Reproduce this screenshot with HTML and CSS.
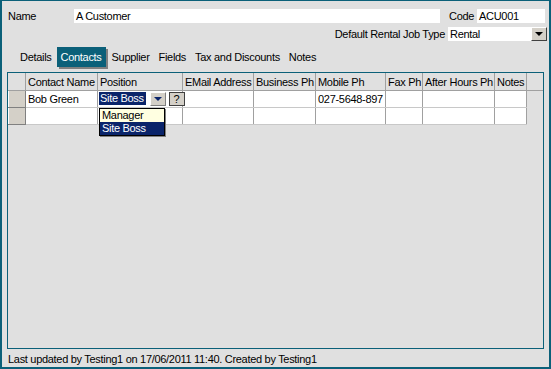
FILE: index.html
```html
<!DOCTYPE html>
<html lang="en">

<head>
    <meta charset="UTF-8">
    <title>Customer</title>
    <link rel="stylesheet" href="styles.css">
</head>

<body>
    <div class="window">
        <div class="row row-name">
            <span class="label label-name">Name</span>
            <span class="field field-name">A Customer</span>
            <span class="label label-code">Code</span>
            <span class="field field-code">ACU001</span>
        </div>
        <div class="row row-type">
            <span class="label">Default Rental Job Type</span>
            <span class="field field-type">Rental
                <span class="combo-btn"><span class="arrow"></span></span>
            </span>
        </div>

        <div class="tabs">
            <span class="tab">Details</span>
            <span class="tab active">Contacts</span>
            <span class="tab">Supplier</span>
            <span class="tab">Fields</span>
            <span class="tab">Tax and Discounts</span>
            <span class="tab">Notes</span>
        </div>

        <div class="grid-box">
            <table class="grid">
                <colgroup>
                    <col style="width: 17px">
                    <col style="width: 72px">
                    <col style="width: 85px">
                    <col style="width: 71px">
                    <col style="width: 62px">
                    <col style="width: 70px">
                    <col style="width: 37px">
                    <col style="width: 72px">
                    <col style="width: 32px">
                    <col>
                </colgroup>
                <tr class="head">
                    <th></th>
                    <th>Contact Name</th>
                    <th>Position</th>
                    <th>EMail Address</th>
                    <th>Business Ph</th>
                    <th>Mobile Ph</th>
                    <th>Fax Ph</th>
                    <th>After Hours Ph</th>
                    <th>Notes</th>
                    <th class="filler"></th>
                </tr>
                <tr>
                    <td class="indicator"></td>
                    <td>Bob Green</td>
                    <td class="editor">
                        <span class="selected">Site Boss</span>
                        <span class="drop-btn"><span class="arrow"></span></span>
                        <span class="help-btn">?</span>
                        <div class="drop-list">
                            <div class="item">Manager</div>
                            <div class="item current">Site Boss</div>
                        </div>
                    </td>
                    <td></td>
                    <td></td>
                    <td>027-5648-897</td>
                    <td></td>
                    <td></td>
                    <td></td>
                    <td class="empty"></td>
                </tr>
                <tr>
                    <td class="indicator"></td>
                    <td></td>
                    <td></td>
                    <td></td>
                    <td></td>
                    <td></td>
                    <td></td>
                    <td></td>
                    <td></td>
                    <td class="empty"></td>
                </tr>
            </table>
        </div>

        <div class="status">Last updated by Testing1 on 17/06/2011 11:40. Created by Testing1</div>
    </div>
</body>

</html>
```

FILE: styles.css
```css
body {
    margin: 0;
    font-family: "Liberation Sans", Arial, sans-serif;
    font-size: 11px;
    letter-spacing: -0.3px;
    color: #000;
}

.window {
    box-sizing: border-box;
    width: 551px;
    height: 369px;
    background-color: #e0e0e0;
    border: 2px solid #0b6079;
    border-top-width: 1px;
    display: flex;
    flex-direction: column;
}

.row {
    display: flex;
    align-items: center;
    height: 14px;
    line-height: 14px;
}

.row-name {
    margin-top: 8px;
    padding-left: 6px;
}

.label-name {
    width: 66px;
}

.field {
    background-color: #fff;
    height: 14px;
    padding-left: 2px;
    box-sizing: border-box;
    white-space: nowrap;
}

.field-name {
    width: 366px;
}

.label-code {
    margin-left: 9px;
    width: 28px;
}

.field-code {
    width: 68px;
}

.row-type {
    margin-top: 4px;
    justify-content: flex-end;
    padding-right: 2px;
}

.field-type {
    width: 99px;
    margin-left: 3px;
    position: relative;
}

.combo-btn {
    position: absolute;
    right: 0;
    top: 0;
    width: 16px;
    height: 14px;
    box-sizing: border-box;
    background-color: #d4d0c8;
    border: 1px solid;
    border-color: #fff #404040 #404040 #fff;
    display: flex;
    align-items: center;
    justify-content: center;
}

.arrow {
    width: 0;
    height: 0;
    border-left: 4px solid transparent;
    border-right: 4px solid transparent;
    border-top: 4px solid #000;
}

.tabs {
    display: flex;
    margin-top: 6px;
    padding-left: 14px;
    height: 20px;
    align-items: center;
}

.tab {
    padding: 3px 4px;
    margin-right: 1px;
    line-height: 14px;
}

.tab.active {
    background-color: #0b6079;
    color: #fff;
    box-shadow: 2px 2px 0 #808080;
    margin-right: 2px;
}

.grid-box {
    margin: 5px 5px 0 5px;
    height: 277px;
    box-sizing: border-box;
    border: 1px solid #0b6079;
    background-color: #e0e0e0;
}

.grid {
    border-collapse: collapse;
    table-layout: fixed;
    width: 100%;
}

.grid th,
.grid td {
    padding: 0 0 0 2px;
    height: 16px;
    text-align: left;
    font-weight: normal;
    white-space: nowrap;
    overflow: visible;
    border-right: 1px solid #a0a0a0;
    border-bottom: 1px solid #c8c8c8;
}

.grid td {
    background-color: #fff;
}

.grid .head th {
    height: 17px;
    border-bottom: 1px solid #a0a0a0;
}

.grid .head th.filler {
    border-right: none;
}

.grid td.empty {
    background-color: #e0e0e0;
    border: none;
}

.grid td.indicator {
    background-color: #d4d0c8;
    padding: 0;
    border-top: 1px solid #fff;
    border-left: 1px solid #fff;
    border-right: 1px solid #808080;
    border-bottom: 1px solid #808080;
}

.grid td.editor {
    padding-left: 1px;
    position: relative;
}

.editor .selected {
    display: inline-block;
    background-color: #0a246a;
    color: #fff;
    padding: 0 1px;
    line-height: 13px;
    width: 45px;
}

.drop-btn,
.help-btn {
    display: inline-block;
    vertical-align: top;
    box-sizing: border-box;
    height: 14px;
    background-color: #d4d0c8;
    text-align: center;
    line-height: 12px;
}

.drop-btn {
    width: 16px;
    margin-left: 1px;
    border: 1px solid;
    border-color: #fff #808080 #808080 #fff;
    padding-top: 4px;
}

.drop-btn .arrow {
    display: inline-block;
    vertical-align: top;
    border-top-color: #0a246a;
}

.help-btn {
    width: 16px;
    border: 1px solid #404040;
}

.drop-list {
    position: absolute;
    left: 1px;
    top: 17px;
    width: 66px;
    box-sizing: border-box;
    border: 1px solid #000;
    background-color: #ffffe1;
    box-shadow: 1px 1px 0 #808080;
    z-index: 2;
}

.drop-list .item {
    padding-left: 2px;
    line-height: 13px;
}

.drop-list .item.current {
    background-color: #0a246a;
    color: #fff;
}

.status {
    padding-left: 6px;
    margin-top: 3px;
    line-height: 14px;
}
```
